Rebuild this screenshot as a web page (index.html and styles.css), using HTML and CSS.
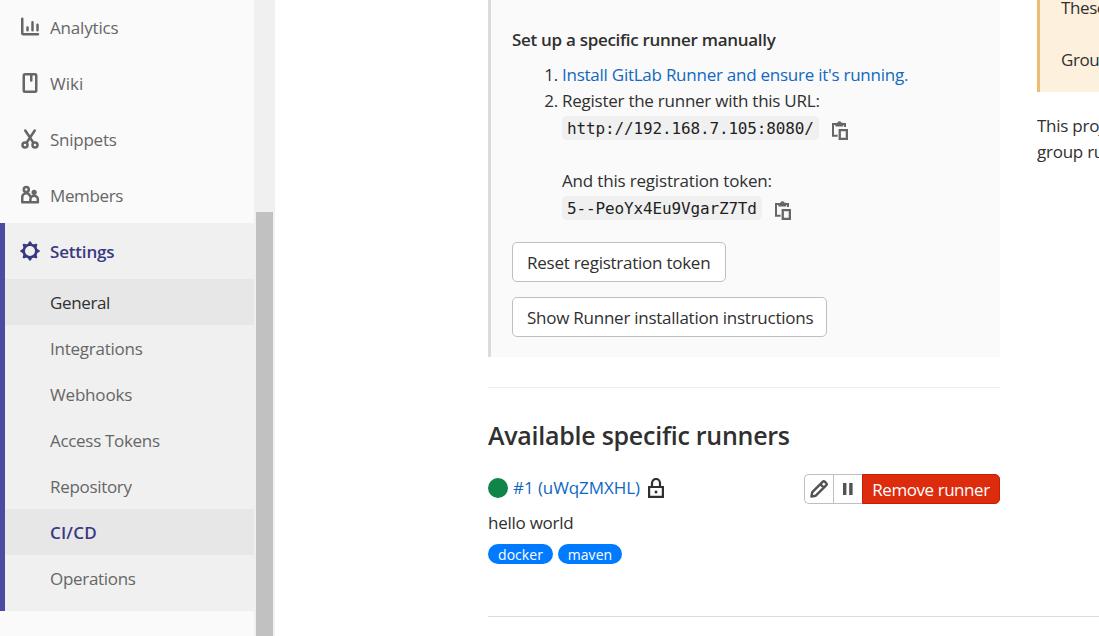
FILE: index.html
```html
<!DOCTYPE html>
<html lang="en">
<head>
<meta charset="utf-8">
<title>CI/CD Settings</title>
<link rel="stylesheet" href="styles.css">
</head>
<body>
<nav class="sidebar">
  <a class="nav-item"><svg class="icon" viewBox="0 0 16 16"><path class="line" d="M1.8 1.4v11.4a1 1 0 0 0 1 1h11.6M6 8.3v2.2M10 4.2v6.3M14 6.2v4.3"/></svg><span class="t-analytics">Analytics</span></a>
  <a class="nav-item"><svg class="icon" viewBox="0 0 16 16"><path class="line" d="M4 1h8a1 1 0 0 1 1 1v12a1 1 0 0 1-1 1H4a1 1 0 0 1-1-1V2a1 1 0 0 1 1-1zM9 2v4"/></svg><span class="t-wiki">Wiki</span></a>
  <a class="nav-item"><svg class="icon" viewBox="0 0 16 16"><path class="line" d="M4.2 1.2l6.4 9.6M11.8 1.2L5.4 10.8"/><circle class="line" cx="4" cy="12.8" r="2"/><circle class="line" cx="12" cy="12.8" r="2"/></svg><span class="t-snippets">Snippets</span></a>
  <a class="nav-item"><svg class="icon" viewBox="0 0 16 16"><circle class="line" cx="5" cy="3.6" r="2"/><path class="line" d="M8 13.8H1.8V9.6A3.2 3.2 0 0 1 8 8.8M8.3 13.8h6v-2.2a3 3 0 0 0-6 0z"/><circle class="solid" cx="11.3" cy="5.8" r="2.1"/></svg><span class="t-members">Members</span></a>
  <div class="nav-group">
    <a class="nav-item nav-current"><svg class="icon" viewBox="0 0 20 20"><circle cx="10" cy="10" r="6.3" fill="none" stroke="currentColor" stroke-width="2.6"/><g class="solid"><path id="tooth" d="M7.6 3.6L8.9.9A1.2 1.2 0 0 1 11.1.9l1.3 2.7z"/><use href="#tooth" transform="rotate(45 10 10)"/><use href="#tooth" transform="rotate(90 10 10)"/><use href="#tooth" transform="rotate(135 10 10)"/><use href="#tooth" transform="rotate(180 10 10)"/><use href="#tooth" transform="rotate(225 10 10)"/><use href="#tooth" transform="rotate(270 10 10)"/><use href="#tooth" transform="rotate(315 10 10)"/></g></svg><span class="t-settings">Settings</span></a>
    <a class="sub-item sub-hover"><span class="t-general">General</span></a>
    <a class="sub-item"><span class="t-integrations">Integrations</span></a>
    <a class="sub-item"><span class="t-webhooks">Webhooks</span></a>
    <a class="sub-item"><span class="t-tokens">Access Tokens</span></a>
    <a class="sub-item"><span class="t-repository">Repository</span></a>
    <a class="sub-item sub-active"><span class="t-cicd">CI/CD</span></a>
    <a class="sub-item"><span class="t-operations">Operations</span></a>
  </div>
</nav>
<div class="scroll-track"><div class="scroll-thumb"></div></div>
<main class="content">
  <div class="columns">
    <section class="specific">
      <div class="card">
        <h5 class="card-title">Set up a specific runner manually</h5>
        <ol class="steps">
          <li><span class="num">1.</span><a class="link t-install">Install GitLab Runner and ensure it's running.</a></li>
          <li><span class="num">2.</span><span class="t-register">Register the runner with this URL:</span></li>
        </ol>
        <div class="code-row"><code>http://192.168.7.105:8080/</code><svg class="copy" viewBox="0 0 16 20"><path d="M5.6 15.8H1V4h3.4M9.6 4H13v3" fill="none" stroke="currentColor" stroke-width="2"/><path class="solid" fill-rule="evenodd" d="M3.4 6.4V3h1.8a2.2 2.2 0 0 1 4.2-.2h1.8v3.6zM6.6 9H16v11H6.6zm2.3 2.3v6.4h4.8v-6.4z"/></svg></div>
        <p class="token-label"><span class="t-token">And this registration token:</span></p>
        <div class="code-row"><code>5--PeoYx4Eu9VgarZ7Td</code><svg class="copy" viewBox="0 0 16 20"><path d="M5.6 15.8H1V4h3.4M9.6 4H13v3" fill="none" stroke="currentColor" stroke-width="2"/><path class="solid" fill-rule="evenodd" d="M3.4 6.4V3h1.8a2.2 2.2 0 0 1 4.2-.2h1.8v3.6zM6.6 9H16v11H6.6zm2.3 2.3v6.4h4.8v-6.4z"/></svg></div>
        <button class="btn btn-reset">Reset registration token</button>
        <button class="btn btn-show">Show Runner installation instructions</button>
      </div>
      <h4 class="list-title"><span>Available specific runners</span></h4>
      <div class="runner">
        <div class="runner-name"><i class="status"></i><a class="link t-runner">#1 (uWqZMXHL)</a><svg class="lock" viewBox="0 0 16 20"><path fill="none" stroke="currentColor" stroke-width="2.2" d="M1.1 9h13.8v9.9H1.1zM4 9V5a4 4 0 0 1 8 0v4"/><path class="solid" d="M6.7 12.7h2.6v2.6H6.7z"/></svg></div>
        <div class="actions">
          <button class="act act-edit"><svg viewBox="0 0 18 18"><path fill="none" stroke="currentColor" stroke-width="2.4" stroke-linejoin="round" d="M1.4 16.6l.9-4.4L12.6 1.9a1.7 1.7 0 0 1 2.4 0l1.1 1.1a1.7 1.7 0 0 1 0 2.4L5.8 15.7zM10.5 4.3l3.2 3.2"/></svg></button><button class="act act-pause"><svg viewBox="0 0 18 18"><path class="solid" d="M4 3h3.4v12H4zM10.2 3h3.4v12h-3.4z"/></svg></button><button class="act act-remove"><span>Remove runner</span></button>
        </div>
      </div>
      <p class="desc"><span>hello world</span></p>
      <div class="tags"><span class="tag tag-docker">docker</span><span class="tag tag-maven">maven</span></div>
    </section>
    <section class="group">
      <div class="notice"><p>These</p><p>Grou</p></div>
      <p class="group-text">This proj<br>group ru</p>
    </section>
  </div>
</main>
</body>
</html>
```
FILE: styles.css
```css
* { box-sizing: border-box; }
body { margin: 0; display: flex; width: 1099px; height: 636px; overflow: hidden; background: #fff; color: #303030; font-family: "Open Sans", "Noto Sans", sans-serif; font-size: 17px; line-height: 26px; font-weight: 400; letter-spacing: -.25px; white-space: nowrap; }
p, h4, h5, ol { margin: 0; padding: 0; }
button { font: inherit; color: inherit; letter-spacing: inherit; margin: 0; }
.solid { fill: currentColor; }
.line { fill: none; stroke: currentColor; stroke-width: 2; stroke-linecap: round; stroke-linejoin: round; }
.sidebar { width: 254px; flex: none; background: #fafafa; color: #666; margin-top: -1px; }
.nav-item { display: flex; align-items: center; height: 56px; padding-left: 20px; gap: 10px; }
.nav-item span, .sub-item span { padding-top: 2px; }
.icon { width: 20px; height: 20px; flex: none; }
.nav-group { background: #f0f0f0; padding-bottom: 10px; border-left: 5px solid #4b4ba3; }
.nav-group .nav-item { padding-left: 15px; }
.nav-current { color: #393982; font-weight: 600; }
.sub-item { display: flex; align-items: center; height: 46px; padding-left: 45px; }
.sub-hover { background: #e7e7e7; color: #303030; }
.sub-active { background: #e7e7e7; color: #393982; font-weight: 600; }
.t-analytics, .t-settings, .t-webhooks, .t-token { letter-spacing: -.18px; }
.t-wiki { letter-spacing: 0; }
.t-members, .t-general { letter-spacing: -.37px; }
.t-tokens, .t-operations, .t-repository { letter-spacing: -.31px; }
.t-cicd { letter-spacing: .2px; }
.t-runner { letter-spacing: -.08px; }
.scroll-track { width: 21px; flex: none; background: #f0f0f0; padding: 212px 2px 0; }
.scroll-thumb { height: 424px; background: #c1c1c1; }
.content { padding-left: 213px; width: 824px; flex: none; }
.columns { display: flex; gap: 37px; height: 617px; border-bottom: 1px solid #dbdbdb; }
.specific { width: 512px; flex: none; }
.card { height: 357px; background: #fafafa; border-left: 3px solid #dbdbdb; padding: 27px 0 0 21px; }
.card-title { font-size: 17px; font-weight: 600; letter-spacing: -.3px; }
.steps { list-style: none; padding-top: 9px; }
.steps li { display: flex; height: 26px; }
.num { width: 46px; text-align: right; margin-right: 4px; }
.link { color: #1068bf; }
.code-row { display: flex; align-items: center; height: 28px; padding-left: 50px; gap: 13px; }
code { font: 16px/24px "DejaVu Sans Mono", monospace; height: 24px; background: #f0f0f0; color: #1f1f1f; border-radius: 5px; padding: 1px 5px 0; letter-spacing: -.14px; }
.copy { width: 16px; height: 20px; color: #666; margin-top: 4px; }
.token-label { padding: 26px 0 0 50px; height: 52px; }
.btn { display: block; height: 40px; padding: 2px 0 0 14px; text-align: left; background: #fff; border: 1px solid #bfbfbf; border-radius: 5px; }
.btn-reset { width: 214px; margin-top: 20px; }
.btn-show { width: 315px; margin-top: 15px; }
.list-title { margin-top: 30px; border-top: 1px solid #eee; padding-top: 30px; height: 87px; font-size: 25px; line-height: 34px; font-weight: 600; letter-spacing: -.26px; }
.runner { display: flex; justify-content: space-between; height: 30px; }
.runner-name { display: flex; align-items: center; height: 28px; }
.status { width: 20px; height: 20px; border-radius: 50%; background: #108548; margin-right: 5px; }
.lock { width: 16px; height: 20px; margin-left: 8px; }
.actions { display: flex; }
.act { height: 30px; border: 1px solid #bfbfbf; background: #fff; color: #525252; padding: 0; display: flex; align-items: center; justify-content: center; }
.act svg { width: 18px; height: 18px; }
.act-edit { width: 29px; border-radius: 5px 0 0 5px; border-right: 0; }
.act-pause { width: 29px; border-right: 0; }
.act-remove { width: 138px; color: #fff; background: #dd2b0e; border-color: #c91c00; border-radius: 0 5px 5px 0; letter-spacing: -.45px; padding-top: 2px; }
.desc { padding-top: 6px; height: 40px; }
.tags { display: flex; gap: 5px; }
.tag { height: 20px; border-radius: 10px; background: #007bff; color: #fff; font-size: 14px; line-height: 22px; letter-spacing: .05px; text-align: center; }
.tag-docker { width: 65px; }
.tag-maven { width: 64px; }
.group { width: 62px; overflow: hidden; flex: none; }
.notice { display: flow-root; height: 92px; background: #fdf1dd; border-left: 3px solid #e9be74; padding-left: 21px; letter-spacing: -.4px; }
.notice p { margin-top: -5px; height: 26px; }
.notice p + p { margin-top: 26px; }
.group-text { padding-top: 21px; }
```
